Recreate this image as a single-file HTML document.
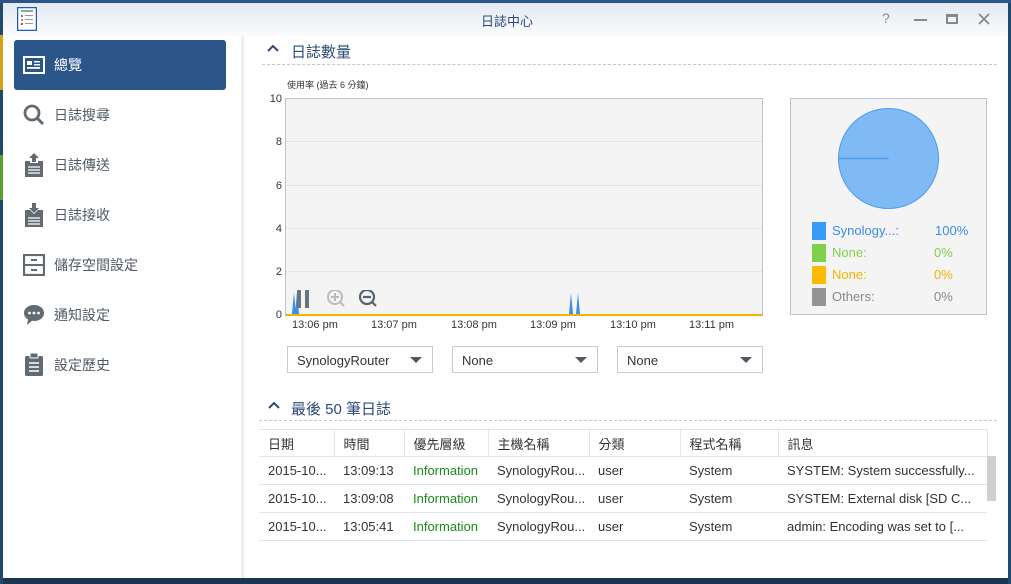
<!DOCTYPE html>
<html><head><meta charset="utf-8">
<style>
*{margin:0;padding:0;box-sizing:border-box}
body{width:1011px;height:584px;overflow:hidden;background:#1d4a6e;font-family:"Liberation Sans","Noto Sans CJK TC",sans-serif;position:relative}
.abs{position:absolute}
#win{position:absolute;left:3px;top:3px;width:1005px;height:575px;background:#fff}
#title{position:absolute;left:0;top:0;width:1005px;height:33px;background:linear-gradient(#e3e9f2,#fbfcfd)}
.nav{position:absolute;left:11px;width:212px;height:50px;display:flex;align-items:center;font-size:14px;color:#505a64}
.nav .ic{width:40px;display:flex;justify-content:center;margin-left:0;margin-right:0}
.sel{background:#2c5589;color:#fff;border-radius:3px}
.t{position:absolute;white-space:nowrap}
.yl{font-size:11px;color:#333;text-align:right;width:20px;left:262px}
.xl{font-size:11px;color:#333;top:319px}
.dd{position:absolute;top:346px;width:146px;height:27px;border:1px solid #c5ccd6;background:#fff;font-size:13px;color:#333;padding:6px 0 0 9px}
.dd:after{content:"";position:absolute;right:10px;top:10px;border-left:6px solid transparent;border-right:6px solid transparent;border-top:6px solid #505a64}
.leg{position:absolute;left:812px;width:14px;height:18px}
.lt{font-size:13px}
table{position:absolute;left:259px;top:429px;border-collapse:collapse;font-size:13px;color:#333;table-layout:fixed}
td,th{height:28px;padding:0 0 0 9px;white-space:nowrap;overflow:hidden;font-weight:normal;text-align:left;border-bottom:1px solid #dde6f0}
th{height:27px;border-top:1px solid #dde6f0;border-right:1px solid #dde6f0}
.g{color:#1a8a1a}
</style></head><body>
<div class="abs" style="left:0;top:0;width:1011px;height:3px;background:#2c5589"></div>
<div class="abs" style="left:0;top:35px;width:3px;height:55px;background:#d9a020"></div>
<div class="abs" style="left:0;top:155px;width:3px;height:45px;background:#5aa030"></div>
<div id="win">
<div id="title">
 <svg class="abs" style="left:14px;top:4px" width="20" height="24" viewBox="0 0 20 24"><rect x="0.5" y="0.5" width="19" height="23" fill="#fff" stroke="#1f5bb0" stroke-width="1.5"/><rect x="4" y="3" width="12" height="2" fill="#8aa"/><rect x="4" y="8" width="2" height="2" fill="#3a8fd8"/><rect x="8" y="8" width="8" height="1" fill="#999"/><rect x="4" y="12" width="2" height="2" fill="#e08030"/><rect x="8" y="12" width="8" height="1" fill="#999"/><rect x="4" y="16" width="2" height="2" fill="#d04040"/><rect x="8" y="16" width="8" height="1" fill="#999"/></svg>
 <div class="t" style="left:478px;top:8px;font-size:13px;color:#2c4a78">日誌中心</div>
 <div class="t" style="left:879px;top:7px;font-size:14px;color:#888">?</div>
 <div class="abs" style="left:911px;top:16px;width:13px;height:2px;background:#888"></div>
 <div class="abs" style="left:943px;top:11px;width:12px;height:10px;border:2px solid #888;border-top-width:3px"></div>
 <svg class="abs" style="left:975px;top:10px" width="12" height="12"><path d="M1 1L11 11M11 1L1 11" stroke="#888" stroke-width="1.8"/></svg>
</div>
<!-- sidebar -->
<div class="abs" style="left:238px;top:33px;width:3px;height:542px;background:#eceef0"></div>
<div class="nav sel" style="top:37px"><div class="ic"><svg width="22" height="18"><rect x="1" y="1" width="20" height="16" fill="none" stroke="#fff" stroke-width="2"/><rect x="4" y="5" width="5" height="4" fill="#fff"/><rect x="11" y="5" width="6" height="1.5" fill="#fff"/><rect x="11" y="8" width="6" height="1.5" fill="#fff"/><rect x="4" y="11" width="13" height="1.8" fill="#fff"/></svg></div>總覽</div>
<div class="nav" style="top:87px"><div class="ic"><svg width="22" height="22"><circle cx="9" cy="9" r="7" fill="none" stroke="#626a74" stroke-width="2.8"/><path d="M14 14L20 20" stroke="#626a74" stroke-width="3"/></svg></div>日誌搜尋</div>
<div class="nav" style="top:137px"><div class="ic"><svg width="20" height="24"><path d="M1 8h5v2h8V8h5v16H1z" fill="#626a74"/><path d="M10 0l5 5h-3v4h-4V5H5z" fill="#626a74"/><path d="M4 14h12M4 17h12M4 20h12" stroke="#fff" stroke-width="1.3"/></svg></div>日誌傳送</div>
<div class="nav" style="top:187px"><div class="ic"><svg width="20" height="24"><path d="M1 7h5l4 4 4-4h5v17H1z" fill="#626a74"/><path d="M8 0h4v5h3l-5 5-5-5h3z" fill="#626a74"/><path d="M4 15h12M4 18h12M4 21h12" stroke="#fff" stroke-width="1.3"/></svg></div>日誌接收</div>
<div class="nav" style="top:237px"><div class="ic"><svg width="22" height="22"><rect x="1" y="1" width="20" height="20" fill="none" stroke="#626a74" stroke-width="2.2"/><path d="M1 11h20" stroke="#626a74" stroke-width="2"/><path d="M8 6h6M8 16h6" stroke="#626a74" stroke-width="2"/></svg></div>儲存空間設定</div>
<div class="nav" style="top:287px"><div class="ic"><svg width="22" height="22"><path d="M11 1C5 1 1 4.5 1 9c0 3 2 5.5 4 6.5L4 21l5-4.2c.6.1 1.3.2 2 .2 6 0 10-3.5 10-8S17 1 11 1z" fill="#626a74"/><circle cx="6.5" cy="9" r="1.4" fill="#fff"/><circle cx="11" cy="9" r="1.4" fill="#fff"/><circle cx="15.5" cy="9" r="1.4" fill="#fff"/></svg></div>通知設定</div>
<div class="nav" style="top:337px"><div class="ic"><svg width="20" height="24"><rect x="1" y="3" width="18" height="20" rx="1.5" fill="#626a74"/><rect x="6" y="0" width="8" height="5" rx="1" fill="#626a74" stroke="#fff" stroke-width="1"/><path d="M5 10h10M5 14h10M5 18h10" stroke="#fff" stroke-width="1.6"/></svg></div>設定歷史</div>
</div>
<!-- section 1 -->
<svg class="abs" style="left:267px;top:44px" width="12" height="8"><path d="M1 7L6 2L11 7" fill="none" stroke="#2c4a78" stroke-width="2"/></svg>
<div class="t" style="left:291px;top:41px;font-size:15px;color:#2c4a78">日誌數量</div>
<div class="abs" style="left:262px;top:64px;width:735px;border-top:1px dashed #c0cad6"></div>
<div class="t" style="left:287px;top:78px;font-size:9px;color:#333">使用率 (過去 6 分鐘)</div>
<div class="abs" style="left:285px;top:98px;width:478px;height:218px;background:#f4f4f4;border:1px solid #b8c2ce"></div>
<div class="abs" style="left:286px;top:141px;width:476px;height:1px;background:#e2e4e8"></div>
<div class="abs" style="left:286px;top:185px;width:476px;height:1px;background:#e2e4e8"></div>
<div class="abs" style="left:286px;top:228px;width:476px;height:1px;background:#e2e4e8"></div>
<div class="abs" style="left:286px;top:271px;width:476px;height:1px;background:#e2e4e8"></div>
<div class="abs" style="left:286px;top:314px;width:476px;height:2px;background:#f0b400"></div>
<div class="t yl" style="top:93px">10</div><div class="t yl" style="top:136px">8</div><div class="t yl" style="top:180px">6</div><div class="t yl" style="top:223px">4</div><div class="t yl" style="top:266px">2</div><div class="t yl" style="top:309px">0</div>
<svg class="abs" style="left:286px;top:290px" width="478" height="25"><path d="M6 24L8 2L10 24ZM9 24L11 2L13 24Z" fill="#3a8fe8"/><path d="M283 24L285 3L287 24ZM290 24L292 3L294 24Z" fill="#3a8fe8"/><rect x="11" y="0" width="4" height="18" fill="#6c737c"/><rect x="19" y="0" width="4" height="18" fill="#6c737c"/><circle cx="49" cy="7" r="7" fill="none" stroke="#b8bcc0" stroke-width="2"/><path d="M49 3v8M45 7h8M54 12l4 4" stroke="#b8bcc0" stroke-width="2"/><circle cx="81" cy="7" r="7" fill="none" stroke="#5a626c" stroke-width="2.2"/><path d="M77 7h8M86 12l4 4" stroke="#5a626c" stroke-width="2.2"/></svg>
<div class="t xl" style="left:292px">13:06 pm</div><div class="t xl" style="left:371px">13:07 pm</div><div class="t xl" style="left:451px">13:08 pm</div><div class="t xl" style="left:530px">13:09 pm</div><div class="t xl" style="left:610px">13:10 pm</div><div class="t xl" style="left:689px">13:11 pm</div>
<div class="dd" style="left:287px">SynologyRouter</div>
<div class="dd" style="left:452px">None</div>
<div class="dd" style="left:617px">None</div>
<div class="abs" style="left:790px;top:98px;width:197px;height:217px;background:#f4f4f4;border:1px solid #b8c2ce"></div>
<svg class="abs" style="left:837px;top:107px" width="103" height="103"><circle cx="51.5" cy="51.5" r="50" fill="#7fbaf5" stroke="#4a9cf0" stroke-width="1"/><path d="M1.5 51.5H51.5" stroke="#4a9cf0" stroke-width="1.5"/></svg>
<div class="leg" style="top:222px;background:#3a9af8"></div><div class="t lt" style="left:832px;top:223px;color:#3a8ae8">Synology...:</div><div class="t lt" style="left:935px;top:223px;color:#3a8ae8">100%</div>
<div class="leg" style="top:244px;background:#7fd04a"></div><div class="t lt" style="left:832px;top:245px;color:#7fd04a">None:</div><div class="t lt" style="left:934px;top:245px;color:#7fd04a">0%</div>
<div class="leg" style="top:266px;background:#fbbb00"></div><div class="t lt" style="left:832px;top:267px;color:#f0b400">None:</div><div class="t lt" style="left:934px;top:267px;color:#f0b400">0%</div>
<div class="leg" style="top:288px;background:#949494"></div><div class="t lt" style="left:832px;top:289px;color:#888">Others:</div><div class="t lt" style="left:934px;top:289px;color:#888">0%</div>
<!-- section 2 -->
<svg class="abs" style="left:268px;top:401px" width="12" height="8"><path d="M1 7L6 2L11 7" fill="none" stroke="#2c4a78" stroke-width="2"/></svg>
<div class="t" style="left:291px;top:398px;font-size:15px;color:#2c4a78">最後 50 筆日誌</div>
<div class="abs" style="left:259px;top:420px;width:738px;border-top:1px dashed #c0cad6"></div>
<table>
<colgroup><col style="width:75px"><col style="width:70px"><col style="width:84px"><col style="width:101px"><col style="width:91px"><col style="width:98px"><col style="width:209px"></colgroup>
<tr><th>日期</th><th>時間</th><th>優先層級</th><th>主機名稱</th><th>分類</th><th>程式名稱</th><th>訊息</th></tr>
<tr><td>2015-10...</td><td>13:09:13</td><td class="g">Information</td><td>SynologyRou...</td><td>user</td><td>System</td><td>SYSTEM: System successfully...</td></tr>
<tr><td>2015-10...</td><td>13:09:08</td><td class="g">Information</td><td>SynologyRou...</td><td>user</td><td>System</td><td>SYSTEM: External disk [SD C...</td></tr>
<tr><td>2015-10...</td><td>13:05:41</td><td class="g">Information</td><td>SynologyRou...</td><td>user</td><td>System</td><td>admin: Encoding was set to [...</td></tr>
</table>
<div class="abs" style="left:987px;top:456px;width:9px;height:45px;background:#cfcfcf"></div>
<div class="abs" style="left:3px;top:578px;width:1005px;height:6px;background:#1a3550"></div>
</body></html>
